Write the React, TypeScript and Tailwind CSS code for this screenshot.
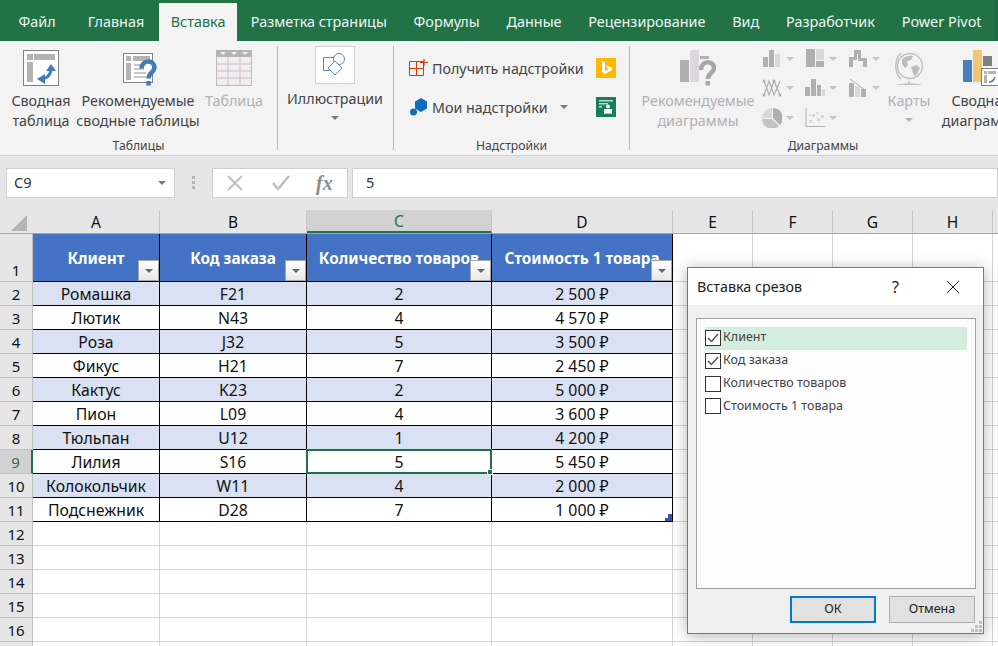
const tabs = [
  { name: 'Файл', extra: 'mr-[5px] px-[13.500px]' },
  { name: 'Главная', extra: 'mr-px px-[13.500px]' },
  { name: 'Вставка', extra: 'bg-[#f3f3f3] px-3 text-[#217346]' },
  { name: 'Разметка страницы', extra: 'px-[13.400px]' },
  { name: 'Формулы', extra: 'px-[13.400px]' },
  { name: 'Данные', extra: 'px-[13.400px]' },
  { name: 'Рецензирование', extra: 'px-[13.400px]' },
  { name: 'Вид', extra: 'px-[13.400px]' },
  { name: 'Разработчик', extra: 'px-[13.400px]' },
  { name: 'Power Pivot', extra: 'px-[13.400px]' },
]

const rows = [
  ['Ромашка', 'F21', '2', '2 500 ₽'],
  ['Лютик', 'N43', '4', '4 570 ₽'],
  ['Роза', 'J32', '5', '3 500 ₽'],
  ['Фикус', 'H21', '7', '2 450 ₽'],
  ['Кактус', 'K23', '2', '5 000 ₽'],
  ['Пион', 'L09', '4', '3 600 ₽'],
  ['Тюльпан', 'U12', '1', '4 200 ₽'],
  ['Лилия', 'S16', '5', '5 450 ₽'],
  ['Колокольчик', 'W11', '4', '2 000 ₽'],
  ['Подснежник', 'D28', '7', '1 000 ₽'],
]

const headers = ['Клиент', 'Код заказа', 'Количество товаров', 'Стоимость 1 товара']
const columns = ['A', 'B', 'C', 'D', 'E', 'F', 'G', 'H', 'I']
const gridCols = 'grid grid-cols-[33px_127px_147px_185px_181px_80px_80px_80px_80px_80px]'
const fields = ['Клиент', 'Код заказа', 'Количество товаров', 'Стоимость 1 товара']

function Caret({ color = '#7a7a7a' }: { color?: string }) {
  return (
    <svg width="8" height="4" viewBox="0 0 8 4" className="block shrink-0">
      <path d="M0 0h8L4 4z" fill={color} />
    </svg>
  )
}

function PivotIcon() {
  return (
    <svg width="36" height="36" viewBox="0 0 36 36">
      <rect x="0.5" y="0.5" width="35" height="35" fill="#fff" stroke="#808080" />
      <path d="M11 4h21v6H11zM4 4h6v6H4zM4 12h6v20H4z" fill="#b3b3b3" />
      <path d="M17 29c6 0 10-3 11-9" fill="none" stroke="#3f7cb8" strokeWidth="3" />
      <path d="M22 24l-8 5 8 5zM23 21l5-7 5 7z" fill="#3f7cb8" />
    </svg>
  )
}

function RecommendedPivotIcon() {
  return (
    <svg width="36" height="36" viewBox="0 0 36 36">
      <rect x="0.5" y="3.5" width="29" height="29" fill="#fff" stroke="#808080" />
      <path d="M3 6h5v5H3zM10 6h17v5H10zM3 13h5v17H3z" fill="#b3b3b3" />
      <path d="M11 15h12M11 19h10M11 23h12M11 27h12" stroke="#c8c8c8" strokeWidth="2" />
      <path d="M18.5 18.5c0-9 13-9 13-1 0 5-6 5-6 11" fill="none" stroke="#3f7cb8" strokeWidth="4.5" />
      <rect x="23.3" y="31" width="4.5" height="4.5" fill="#3f7cb8" />
    </svg>
  )
}

function TableIcon() {
  return (
    <svg width="36" height="36" viewBox="0 0 36 36">
      <rect x="0.5" y="0.5" width="35" height="35" fill="#f3ecf1" stroke="#bcbcbc" />
      <rect width="36" height="7" fill="#b4b4b4" />
      <path d="M4 2h6l-3 3zM15 2h6l-3 3zM26 2h6l-3 3z" fill="#f0f0f0" />
      <path d="M12 7v28M24 7v28M1 14h34M1 21h34M1 28h34" stroke="#c6bfc6" />
    </svg>
  )
}

function IllustrationIcon() {
  return (
    <svg width="24" height="24" viewBox="0 0 24 24" fill="none" stroke="#5f88b8">
      <rect x="0.5" y="4.5" width="13" height="13" fill="#fff" />
      <circle cx="16" cy="6" r="5.5" fill="#fff" />
      <path d="M12 8l7 7-7 7-7-7z" fill="#fff" />
    </svg>
  )
}

function GetAddinsIcon() {
  return (
    <svg width="20" height="18" viewBox="0 0 20 18" fill="none" stroke="#d83b01">
      <path d="M0.5 2.5h14v14H0.5zM0.5 9.5h14M7.5 2.5v14" />
      <path d="M11 3.5h8M15 0v7" strokeWidth="1.2" />
    </svg>
  )
}

function MyAddinsIcon() {
  return (
    <svg width="18" height="18" viewBox="0 0 18 18">
      <path d="M11 0l6 3.5v7L11 14l-6-3.500v-7z" fill="#0f6cbd" />
      <circle cx="3.500" cy="14" r="3.500" fill="#0f6cbd" />
    </svg>
  )
}

function BingIcon() {
  return (
    <svg width="20" height="20" viewBox="0 0 20 20" className="shrink-0">
      <rect width="20" height="20" fill="#ffb900" />
      <path d="M6 3l3 1v9l4-2-2-1-1-3 6 3v2l-7 4-3-2z" fill="#fff" />
    </svg>
  )
}

function PeopleGraphIcon() {
  return (
    <svg width="20" height="20" viewBox="0 0 20 20" className="shrink-0">
      <rect width="20" height="20" fill="#157f5a" />
      <path d="M3 3h14v1.500H3zM3 6h9v1.500H3zM3 9h3v1.500H3z" fill="#b7dccd" />
      <circle cx="12" cy="9.500" r="2" fill="#fff" />
      <path d="M8 12h8v5h-1.500v-0.500h-5V17H8z" fill="#fff" />
    </svg>
  )
}

function RecommendedChartIcon() {
  return (
    <svg width="36" height="36" viewBox="0 0 36 36">
      <rect x="0" y="10" width="9" height="22" fill="#b1afb1" />
      <rect x="10" y="0" width="9" height="32" fill="#dcd7dc" />
      <rect x="20" y="6" width="9" height="3" fill="#b1afb1" />
      <path d="M21 20c0-10 13-10 13-2 0 5-6 5-6 11" fill="none" stroke="#a9a7a9" strokeWidth="4.500" />
      <rect x="25.500" y="31" width="4.500" height="4.500" fill="#a9a7a9" />
    </svg>
  )
}

function MiniChart({ kind }: { kind: number }) {
  const dark = '#b1afb1'
  const light = '#dcd7dc'
  return (
    <svg width="20" height="20" viewBox="0 0 20 20" className="shrink-0">
      {kind === 0 && (
        <>
          <rect x="1" y="8" width="5" height="10" fill={dark} />
          <rect x="7" y="1" width="5" height="17" fill={dark} />
          <rect x="13" y="5" width="5" height="13" fill={light} />
        </>
      )}
      {kind === 1 && (
        <>
          <rect x="1" y="0" width="9" height="18" fill={dark} />
          <rect x="11" y="0" width="8" height="11" fill={light} />
          <rect x="11" y="12" width="8" height="6" fill={dark} />
        </>
      )}
      {kind === 2 && <path d="M1 18V8h5V1h7v8h6v9h-4v-6h-5V5H9v6H5v7z" fill={dark} />}
      {kind === 3 && (
        <>
          <path d="M2 3l5 14 5-14 6 14M2 17l5-14 5 14 6-14" fill="none" stroke={dark} strokeWidth="1.200" />
          <circle cx="2" cy="3" r="1.500" fill={dark} />
          <circle cx="12" cy="3" r="1.500" fill={dark} />
          <circle cx="2" cy="17" r="1.500" fill={dark} />
          <circle cx="18" cy="17" r="1.500" fill={dark} />
        </>
      )}
      {kind === 4 && (
        <>
          <rect x="0" y="9" width="5" height="9" fill={dark} />
          <rect x="6" y="1" width="5" height="17" fill={dark} />
          <rect x="12" y="7" width="4" height="11" fill={dark} />
          <rect x="17" y="11" width="3" height="7" fill={light} />
        </>
      )}
      {kind === 5 && (
        <>
          <rect x="1" y="5" width="5" height="14" fill={dark} />
          <rect x="7" y="8" width="5" height="11" fill={light} />
          <rect x="13" y="11" width="5" height="8" fill={dark} />
          <path d="M2 1l7 5 9 7" fill="none" stroke={dark} />
        </>
      )}
      {kind === 6 && (
        <>
          <path d="M10 0v10H0A10 10 0 0 1 10 0z" fill={light} />
          <path d="M11 0a10 10 0 0 1 7 17l-7-7z" fill={dark} />
          <path d="M0 11h10l7 7A10 10 0 0 1 0 11z" fill="#c4c2c4" />
        </>
      )}
      {kind === 7 && (
        <>
          <path d="M1 0v18.500h19" fill="none" stroke={dark} />
          <path d="M4 12h3v3H4zM7 6h3v3H7zM11 4h2v2h-2zM12 10h3v3h-3zM16 7h3v3h-3zM4 6h2v2H4z" fill={light} />
        </>
      )}
    </svg>
  )
}

function GlobeIcon() {
  return (
    <svg width="30" height="36" viewBox="0 0 30 36">
      <circle cx="16" cy="16" r="12.500" fill="#f3f3f3" stroke="#c2c0c2" strokeWidth="1.500" />
      <path d="M8 9c4-3 8-4 11-3l-2 4-4 1 1 4-3 3-3-4zM17 17l6-2 3 3-3 6-3 2z" fill="#bdbbbd" />
      <path d="M7 3C0 10 0 22 7 29M15 31v3" fill="none" stroke="#c2c0c2" strokeWidth="1.500" />
      <path d="M2 35c3-2 23-2 26 0z" fill="#c2c0c2" />
    </svg>
  )
}

function PivotChartIcon() {
  return (
    <svg width="36" height="36" viewBox="0 0 36 36">
      <rect x="0" y="10" width="9" height="22" fill="#4a7ebb" />
      <rect x="10" y="0" width="9" height="32" fill="#f0c674" />
      <rect x="20" y="6" width="9" height="10" fill="#7f7f7f" />
      <rect x="18.500" y="18.500" width="17" height="17" fill="#fff" stroke="#808080" />
      <path d="M21 21h3v3h-3zM25 21h8v3h-8zM21 25h3v8h-3z" fill="#b3b3b3" />
      <path d="M26 32c3 0 5-2 6-5" fill="none" stroke="#3f7cb8" strokeWidth="1.500" />
    </svg>
  )
}

function RibbonButton({ icon, lines, width, disabled, caret, iconShift = '' }: { icon: React.ReactNode; lines: string[]; width: string; disabled?: boolean; caret?: boolean; iconShift?: string }) {
  return (
    <div className={`flex shrink-0 flex-col items-center pt-[9px] ${width}`}>
      <div className={`flex h-9 items-center justify-center ${iconShift}`}>{icon}</div>
      <div className={`mt-[5px] text-center leading-5 whitespace-nowrap ${disabled ? 'text-[#b1b1b1]' : 'text-[#444]'}`}>
        {lines.map((line) => (
          <div key={line}>{line}</div>
        ))}
      </div>
      {caret && (
        <div className="mt-[7px]">
          <Caret color={disabled ? '#b1b1b1' : '#7a7a7a'} />
        </div>
      )}
    </div>
  )
}

function Group({ label, width, children }: { label: string; width: string; children: React.ReactNode }) {
  return (
    <div className={`flex h-[114px] shrink-0 flex-col ${width}`}>
      <div className="flex flex-1 overflow-hidden">{children}</div>
      <div className="h-5 pt-px text-center text-[12.200px] leading-5 text-[#444]">{label}</div>
    </div>
  )
}

function Separator() {
  return <div className="mt-[5px] h-[104px] w-px shrink-0 bg-[#b9b9b9]" />
}

function Ribbon() {
  const minis = [0, 1, 2, 3, 4, 5, 6, 7]
  return (
    <div className="flex h-[115px] border-b border-[#d2d2d2] bg-[#f3f3f3] text-[14.300px]">
      <Group label="Таблицы" width="w-[277px]">
        <div className="flex pl-[5px]">
          <RibbonButton width="w-[72px]" icon={<PivotIcon />} lines={['Сводная', 'таблица']} />
          <RibbonButton width="w-[122px]" iconShift="ml-[6px]" icon={<RecommendedPivotIcon />} lines={['Рекомендуемые', 'сводные таблицы']} />
          <RibbonButton width="w-[58px] ml-[6px]" icon={<TableIcon />} lines={['Таблица']} disabled />
        </div>
      </Group>
      <Separator />
      <Group label="" width="w-[115px]">
        <div className="flex w-full flex-col items-center pr-px pt-[5px]">
          <div className="flex h-[38px] w-10 items-center justify-center border border-[#d2d2d2] bg-white">
            <IllustrationIcon />
          </div>
          <div className="mt-[5px] leading-5 text-[#444]">Иллюстрации</div>
          <div className="mt-[7px]">
            <Caret />
          </div>
        </div>
      </Group>
      <Separator />
      <Group label="Надстройки" width="w-[235px]">
        <div className="flex flex-col pl-[15px] pt-[17px] leading-5 text-[#444]">
          <div className="flex h-5 items-center">
            <div className="w-[23px] shrink-0">
              <GetAddinsIcon />
            </div>
            <span className="w-[164px] whitespace-nowrap pt-px">Получить надстройки</span>
            <BingIcon />
          </div>
          <div className="mt-[19px] flex h-5 items-center">
            <div className="w-[23px] shrink-0 pl-px">
              <MyAddinsIcon />
            </div>
            <div className="flex w-[164px] items-center">
              <span className="w-[128px] whitespace-nowrap pt-px">Мои надстройки</span>
              <Caret />
            </div>
            <PeopleGraphIcon />
          </div>
        </div>
      </Group>
      <Separator />
      <Group label="Диаграммы" width="w-[386px]">
        <div className="flex pl-2">
          <RibbonButton width="w-[120px]" icon={<RecommendedChartIcon />} lines={['Рекомендуемые', 'диаграммы']} disabled />
          <div className="grid w-[126px] shrink-0 grid-cols-[43px_43px_43px] grid-rows-[29px_30px_29px] content-start pl-1 pt-[3px]">
            {minis.map((kind) => (
              <div key={kind} className="flex items-center gap-1">
                <MiniChart kind={kind} />
                <Caret color="#c4c4c4" />
              </div>
            ))}
          </div>
          <RibbonButton width="w-[50px]" icon={<GlobeIcon />} lines={['Карты']} disabled caret />
          <RibbonButton width="w-[94px]" icon={<PivotChartIcon />} lines={['Сводная', 'диаграмма']} />
        </div>
      </Group>
    </div>
  )
}

function FormulaBar() {
  return (
    <div className="flex h-[54px] items-start bg-[#e6e6e6] pl-[6px] pt-3 text-[14.500px] text-[#333]">
      <div className="flex h-[30px] w-[169px] items-center justify-between border border-[#d0d0d0] bg-white pl-[7px] pr-2">
        <span>C9</span>
        <Caret />
      </div>
      <div className="flex w-[37px] flex-col items-center gap-[2px] pt-2">
        <div className="size-[3px] bg-[#b4b4b4]" />
        <div className="size-[3px] bg-[#b4b4b4]" />
        <div className="size-[3px] bg-[#b4b4b4]" />
      </div>
      <div className="flex h-[30px] w-[136px] items-center border border-[#d0d0d0] bg-white pl-[14px]">
        <svg width="16" height="16" viewBox="0 0 16 16" fill="none" stroke="#c0c0c0" strokeWidth="2" className="shrink-0">
          <path d="M1 1l14 14M15 1L1 15" />
        </svg>
        <svg width="18" height="16" viewBox="0 0 18 16" fill="none" stroke="#c0c0c0" strokeWidth="2.500" className="ml-[29px] shrink-0">
          <path d="M1 8l5 6L17 1" />
        </svg>
        <span className="ml-[26px] font-['Liberation_Serif',serif] text-[20px] font-bold italic text-[#8c8c8c]">fx</span>
      </div>
      <div className="ml-1 flex h-[30px] flex-1 items-center border border-[#d0d0d0] bg-white pl-[13px]">5</div>
    </div>
  )
}

function FilterButton() {
  return (
    <div className="absolute bottom-0 right-0 flex h-[21px] w-[21px] items-center justify-center border border-[#a6a6a6] bg-linear-to-b from-white to-[#e8e8e8]">
      <Caret color="#666" />
    </div>
  )
}

function Sheet() {
  return (
    <div className="text-[15.800px] leading-5 text-[#111]">
      <div className={`${gridCols} h-6 border-b border-[#a6a6a6] bg-[#e6e6e6] text-[15.500px]`}>
        <div className="flex items-center justify-center pl-1 pt-[2px]">
          <svg width="18" height="18" viewBox="0 0 18 18">
            <path d="M17 1v16H1z" fill="#b4b4b4" />
          </svg>
        </div>
        {columns.map((c) => (
          <div
            key={c}
            className={`flex items-center justify-center border-r border-[#c8c8c8] ${c === 'C' ? 'border-b-2 border-b-[#217346] bg-[#d2d2d2] text-[#217346]' : ''}`}
          >
            {c}
          </div>
        ))}
      </div>
      <div className={`${gridCols} h-12`}>
        <div className="flex items-end justify-center border-b border-r border-[#c0c0c0] bg-[#e6e6e6] pb-px text-[15px]">1</div>
        {headers.map((h) => (
          <div key={h} className="relative flex items-center justify-center overflow-hidden border-b border-r border-black bg-[#4472c4] text-[15.300px] font-bold whitespace-nowrap text-white">
            {h}
            <FilterButton />
          </div>
        ))}
        {[0, 1, 2, 3, 4].map((i) => (
          <div key={i} className="border-b border-r border-[#d4d4d4] bg-white" />
        ))}
      </div>
      {rows.map((row, i) => (
        <div key={row[0]} className={`${gridCols} h-6`}>
          <div
            className={`flex items-center justify-center border-b border-[#c0c0c0] text-[15px] ${i === 7 ? 'border-r-2 border-r-[#217346] bg-[#d2d2d2] text-[#217346]' : 'border-r bg-[#e6e6e6]'}`}
          >
            {i + 2}
          </div>
          {row.map((value, j) => (
            <div
              key={j}
              className={`relative flex items-center justify-center border-b border-r border-black pt-px ${i % 2 === 0 ? 'bg-[#d9e1f2]' : 'bg-white'}`}
            >
              {value}
              {i === 7 && j === 2 && (
                <div className="absolute -left-px -top-px z-10 h-[25px] w-[186px] border-2 border-[#217346]">
                  <div className="absolute -bottom-[3px] -right-[3px] size-[6px] border border-white bg-[#217346]" />
                </div>
              )}
              {i === 9 && j === 3 && (
                <svg width="7" height="7" viewBox="0 0 7 7" className="absolute bottom-0 right-0">
                  <path d="M0 7V4h3V0h4v7z" fill="#3f51a8" />
                </svg>
              )}
            </div>
          ))}
          {[0, 1, 2, 3, 4].map((k) => (
            <div key={k} className="border-b border-r border-[#d4d4d4] bg-white" />
          ))}
        </div>
      ))}
      {[12, 13, 14, 15, 16, 17].map((n) => (
        <div key={n} className={`${gridCols} h-6`}>
          <div className="flex items-center justify-center border-b border-r border-[#c0c0c0] bg-[#e6e6e6] text-[15px]">{n}</div>
          {[0, 1, 2, 3, 4, 5, 6, 7, 8].map((k) => (
            <div key={k} className="border-b border-r border-[#d4d4d4] bg-white" />
          ))}
        </div>
      ))}
    </div>
  )
}

function SlicerDialog() {
  return (
    <div className="absolute left-[687px] top-[267px] z-20 flex h-[367px] w-[297px] flex-col border border-[#7a7a7a] bg-[#f0f0f0] text-[12.500px] text-[#444] shadow-[0_2px_14px_rgba(0,0,0,0.3)]">
      <div className="flex h-[37px] items-center bg-white pl-[9px] text-[14.300px] text-[#222]">
        <span className="flex-1">Вставка срезов</span>
        <span className="mr-[47px] text-[16px]">?</span>
        <svg width="14" height="14" viewBox="0 0 14 14" className="mr-[23px]" fill="none" stroke="#222">
          <path d="M1 1l12 12M13 1L1 13" />
        </svg>
      </div>
      <div className="ml-2 mr-[7px] mt-[13px] h-[271px] border border-[#a0a0a0] bg-[#fdfdfd] px-2 pt-2">
        {fields.map((field, i) => (
          <div key={field} className={`flex h-[22.700px] items-center ${i === 0 ? 'bg-[#d3eedf]' : ''}`}>
            <div className="flex size-4 shrink-0 items-center justify-center border border-[#333] bg-white">
              {i < 2 && (
                <svg width="12" height="10" viewBox="0 0 12 10" fill="none" stroke="#555" strokeWidth="1.500">
                  <path d="M1 5l3.500 3.500L11 1" />
                </svg>
              )}
            </div>
            <span className="ml-[2px] pb-px">{field}</span>
          </div>
        ))}
      </div>
      <div className="relative mt-[7px] flex justify-end gap-[13px] pr-2 text-[12.500px] text-[#222]">
        <button className="h-[27px] w-[86px] border-2 border-[#0078d7] bg-[#e1e1e1]">ОК</button>
        <button className="h-[27px] w-[86px] border border-[#adadad] bg-[#e1e1e1]">Отмена</button>
        <svg width="12" height="12" viewBox="0 0 12 12" className="absolute -bottom-[10px] right-0" fill="#bdbdbd">
          <path d="M8 0h3v3H8zM4 4h3v3H4zM8 4h3v3H8zM0 8h3v3H0zM4 8h3v3H4zM8 8h3v3H8z" />
        </svg>
      </div>
    </div>
  )
}

export default function App() {
  return (
    <div className="relative h-[646px] w-[998px] overflow-hidden bg-white font-['Noto_Sans',sans-serif]">
      <div className="flex h-[41px] bg-[#217346] pl-[5px] pt-[3px] text-[14.400px] text-[#eef5f1]">
        {tabs.map((tab) => (
          <div key={tab.name} className={`flex h-[38px] items-center whitespace-nowrap ${tab.extra}`}>
            {tab.name}
          </div>
        ))}
        <div className="-mt-[3px] ml-auto h-[41px] w-1 bg-[#1d6a40]" />
      </div>
      <Ribbon />
      <FormulaBar />
      <Sheet />
      <SlicerDialog />
    </div>
  )
}
